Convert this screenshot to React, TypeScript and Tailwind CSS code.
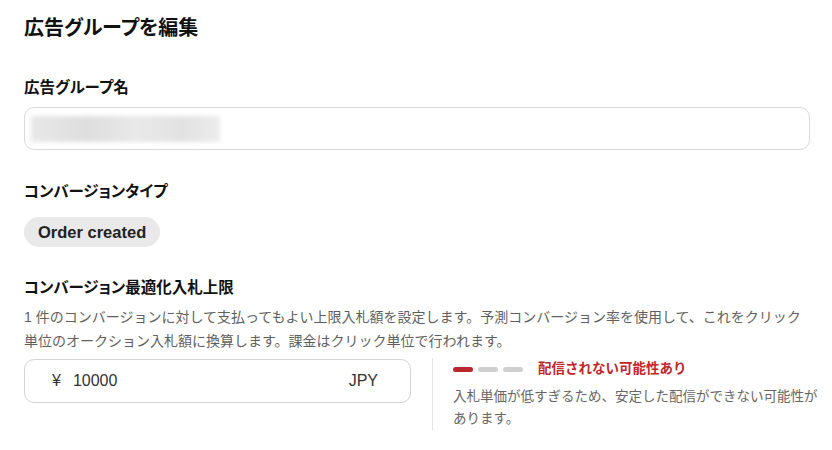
export default function App() {
  return (
    <div
      className="w-[832px] h-[450px] bg-white overflow-hidden px-6 text-[#111111]"
      style={{ fontFamily: '"Liberation Sans", "Noto Sans CJK JP", sans-serif' }}
    >
      {/* Title */}
      <h1 className="pt-[14px] text-[20px] leading-7 font-bold [font-feature-settings:'palt']">
        広告グループを編集
      </h1>

      {/* Ad group name */}
      <div className="mt-[34px] text-[15.5px] leading-6 font-bold [font-feature-settings:'palt']">広告グループ名</div>
      <div className="mt-[7px] h-[43px] w-[786px] rounded-[10px] border border-[#dadada] flex items-center pl-[6px]">
        <div className="w-[189px] h-[26px] bg-[linear-gradient(90deg,#e8e8e8,#dedede_30%,#e9e9e9_55%,#e2e2e2_80%,#ececec)] blur-[2px]" />
      </div>

      {/* Conversion type */}
      <div className="mt-[30px] text-[15.5px] leading-6 font-bold [font-feature-settings:'palt']">コンバージョンタイプ</div>
      <div className="mt-[13px] inline-flex h-[30px] items-center rounded-full bg-[#e9e9e9] px-[14px] text-[16.5px] font-bold text-[#222]">
        Order created
      </div>

      {/* Conversion bid cap */}
      <div className="mt-[29px] text-[15.5px] leading-6 font-bold [font-feature-settings:'palt']">
        コンバージョン最適化入札上限
      </div>
      <p className="mt-[5px] text-[14px] leading-6 text-[#5f5f5f] whitespace-nowrap">
        <span className="block">
          1 件のコンバージョンに対して支払ってもよい上限入札額を設定します。予測コンバージョン率を使用して、これをクリック
        </span>
        <span className="block">単位のオークション入札額に換算します。課金はクリック単位で行われます。</span>
      </p>

      <div className="mt-[5px] flex items-start">
        <div className="mt-px h-[44px] w-[387px] shrink-0 rounded-[10px] border border-[#d4d4d4] flex items-center pl-[27px] pr-[32px] text-[16px] text-[#333]">
          <span>¥</span>
          <span className="ml-3">10000</span>
          <span className="ml-auto">JPY</span>
        </div>

        <div className="ml-[21px] h-[72px] shrink-0 border-l border-[#e4e4e4] pl-5">
          <div className="flex h-[22px] items-center">
            <span className="h-[5px] w-5 rounded-full bg-[#b8282d]" />
            <span className="ml-[5px] h-[5px] w-5 rounded-full bg-[#cfcfcf]" />
            <span className="ml-[5px] h-[5px] w-5 rounded-full bg-[#cfcfcf]" />
            <span className="ml-[15px] text-[13.5px] font-bold text-[#c0272d]">配信されない可能性あり</span>
          </div>
          <p className="mt-[6px] text-[13.5px] leading-[22px] text-[#666] whitespace-nowrap">
            <span className="block">入札単価が低すぎるため、安定した配信ができない可能性が</span>
            <span className="block">あります。</span>
          </p>
        </div>
      </div>
    </div>
  )
}
